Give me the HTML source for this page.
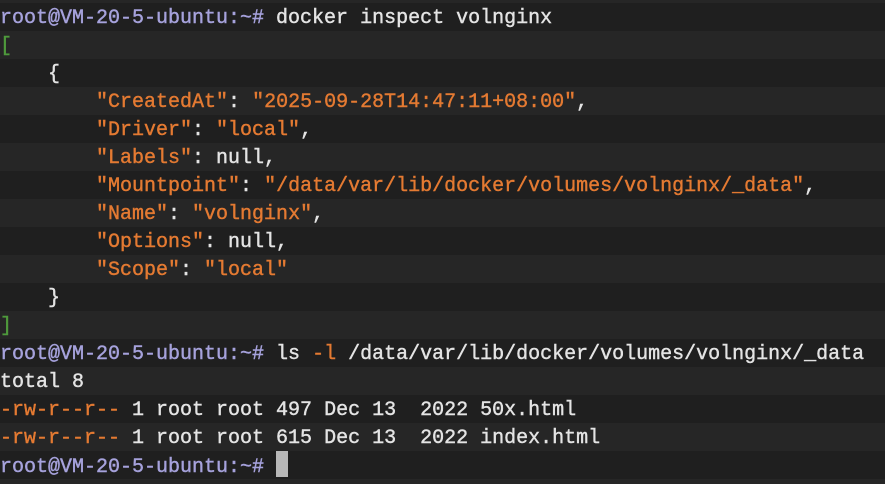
<!DOCTYPE html>
<html><head><style>
html,body{margin:0;padding:0;width:885px;height:484px;overflow:hidden;background:#262626}
.wrap{position:absolute;top:3px;left:0;width:885px}
.l{height:28px;line-height:32px;overflow:hidden;white-space:pre;font-family:"Liberation Mono",monospace;font-size:20px;color:#e4e4e4;background:#1f1f1f;-webkit-text-stroke:0.4px currentColor}
.l:nth-child(even){background:#262626}
.p{color:#a6a2dc}.o{color:#e47a32}.g{color:#4f9a3c}
.cur{display:inline-block;width:12px;height:26px;background:#b8b8b8;vertical-align:-5px;-webkit-text-stroke:0}
</style></head><body><div class="wrap">
<div class="l"><span class="p">root@VM-20-5-ubuntu:~#</span> docker inspect volnginx</div>
<div class="l"><span class="g">[</span></div>
<div class="l">    {</div>
<div class="l">        <span class="o">"CreatedAt"</span>: <span class="o">"2025-09-28T14:47:11+08:00"</span>,</div>
<div class="l">        <span class="o">"Driver"</span>: <span class="o">"local"</span>,</div>
<div class="l">        <span class="o">"Labels"</span>: null,</div>
<div class="l">        <span class="o">"Mountpoint"</span>: <span class="o">"/data/var/lib/docker/volumes/volnginx/_data"</span>,</div>
<div class="l">        <span class="o">"Name"</span>: <span class="o">"volnginx"</span>,</div>
<div class="l">        <span class="o">"Options"</span>: null,</div>
<div class="l">        <span class="o">"Scope"</span>: <span class="o">"local"</span></div>
<div class="l">    }</div>
<div class="l"><span class="g">]</span></div>
<div class="l"><span class="p">root@VM-20-5-ubuntu:~#</span> ls <span class="o">-l</span> /data/var/lib/docker/volumes/volnginx/_data</div>
<div class="l">total 8</div>
<div class="l"><span class="o">-rw-r--r--</span> 1 root root 497 Dec 13  2022 50x.html</div>
<div class="l"><span class="o">-rw-r--r--</span> 1 root root 615 Dec 13  2022 index.html</div>
<div class="l"><span class="p">root@VM-20-5-ubuntu:~#</span> <span class="cur"></span></div>
</div></body></html>
